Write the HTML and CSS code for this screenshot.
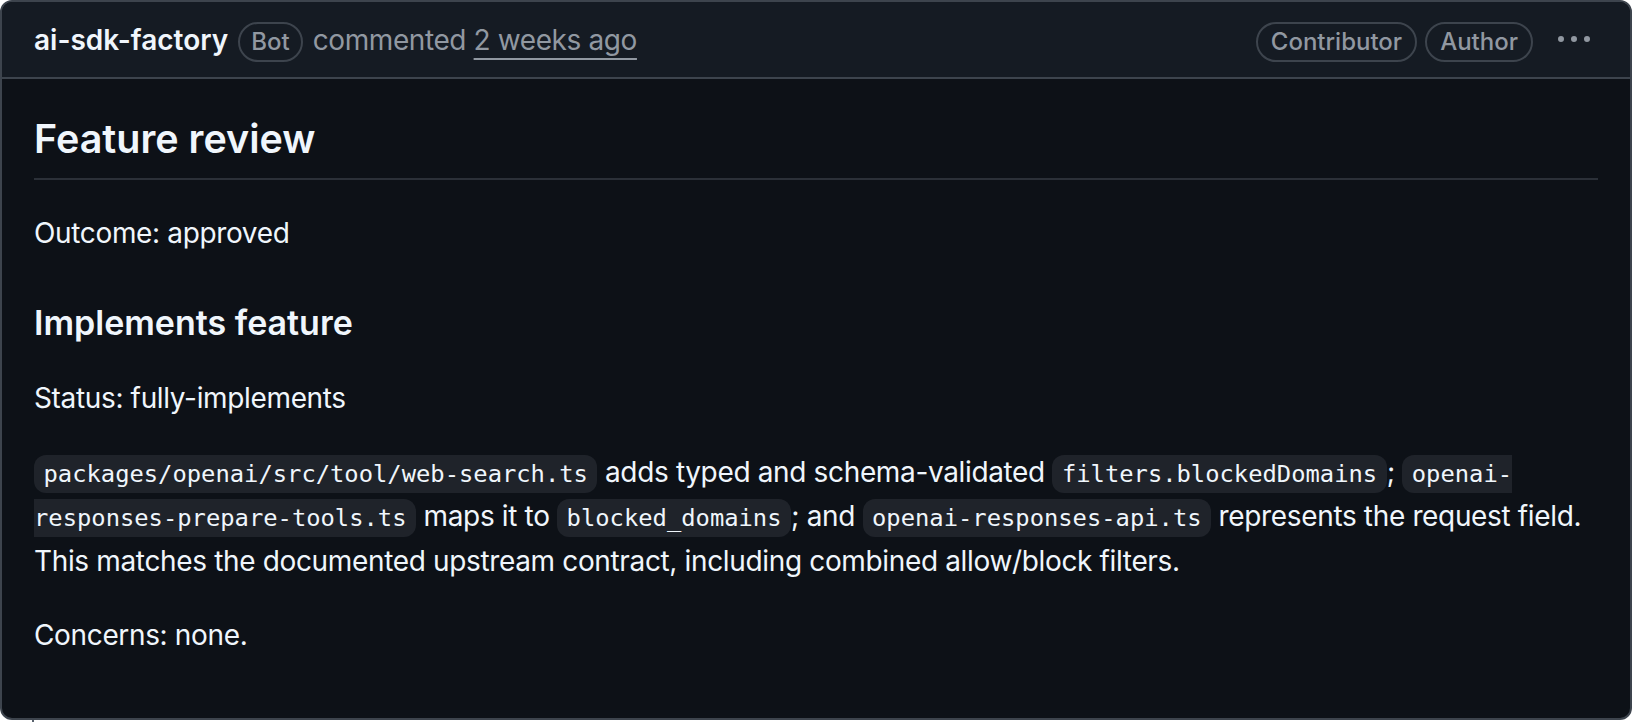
FILE: index.html
```html
<!DOCTYPE html>
<html lang="en">
<head>
<meta charset="utf-8">
<title>Comment</title>
<link rel="stylesheet" href="styles.css">
</head>
<body>
<div class="timeline-item">
  <div class="comment">
    <div class="comment-header">
      <div class="header-left">
        <a class="author">ai-sdk-factory</a>
        <span class="label label-bot">Bot</span>
        <span class="meta">commented <a class="timestamp">2 weeks ago</a></span>
      </div>
      <div class="header-right">
        <span class="label">Contributor</span>
        <span class="label">Author</span>
        <button class="kebab" aria-label="Show options">
          <svg width="32" height="32" viewBox="0 0 16 16" fill="currentColor"><path d="M8 9a1.5 1.5 0 1 0 0-3 1.5 1.5 0 0 0 0 3ZM1.5 9a1.5 1.5 0 1 0 0-3 1.5 1.5 0 0 0 0 3Zm13 0a1.5 1.5 0 1 0 0-3 1.5 1.5 0 0 0 0 3Z"></path></svg>
        </button>
      </div>
    </div>
    <div class="comment-body">
      <h2>Feature review</h2>
      <p>Outcome: approved</p>
      <h3>Implements feature</h3>
      <p>Status: fully-implements</p>
      <p><code>packages/openai/src/tool/web-search.ts</code> adds typed and schema-validated <code>filters.blockedDomains</code>; <code>openai-responses-prepare-tools.ts</code> maps it to <code>blocked_domains</code>; and <code>openai-responses-api.ts</code> represents the request field.<br>This matches the documented upstream contract, including combined allow/block filters.</p>
      <p>Concerns: none.</p>
    </div>
  </div>
  <div class="timeline-line"></div>
</div>
</body>
</html>
```
FILE: styles.css
```css
html, body {
  margin: 0;
  padding: 0;
  background: #ffffff;
}

body {
  font-family: Inter, "Noto Sans", "Liberation Sans", sans-serif;
  font-size: 28px;
  line-height: 1.5;
  color: #f0f6fc;
}

.timeline-item {
  display: flex;
  flex-direction: column;
  width: 1632px;
}

.comment {
  border: 2px solid #3d444d;
  border-radius: 12px;
  background: #0d1117;
  overflow: hidden;
}

.comment-header {
  display: flex;
  align-items: center;
  justify-content: space-between;
  height: 75px;
  padding: 0 40px 0 32px;
  background: #151b23;
  border-bottom: 2px solid #3d444d;
}

.header-left,
.header-right {
  display: flex;
  align-items: center;
}

.author {
  font-weight: 600;
  color: #f0f6fc;
  margin-right: 10px;
}

.label {
  display: inline-flex;
  align-items: center;
  height: 36px;
  margin-top: 5px;
  padding: 0 13px;
  border: 2px solid #3d444d;
  border-radius: 40px;
  font-size: 24px;
  font-weight: 500;
  color: #9198a1;
  line-height: 36px;
}

.label-bot {
  margin-right: 10px;
  padding: 0 11px;
}

.header-right .label + .label {
  margin-left: 8px;
}

.meta {
  color: #9198a1;
  letter-spacing: -0.4px;
}

.timestamp {
  color: #9198a1;
  text-decoration: underline;
  text-decoration-thickness: 2px;
  text-underline-offset: 8px;
}

.kebab {
  display: flex;
  align-items: center;
  justify-content: center;
  margin-left: 25px;
  padding: 0;
  width: 32px;
  height: 32px;
  border: 0;
  background: transparent;
  color: #9198a1;
}

.comment-body {
  padding: 34px 32px 62px;
}

.comment-body h2 {
  margin: 0 0 32px;
  font-size: 39.5px;
  font-weight: 600;
  line-height: 52px;
  padding-bottom: 13px;
  border-bottom: 2px solid #2b3038;
}

.comment-body h3 {
  margin: 47px 0 32px;
  font-size: 34px;
  font-weight: 600;
  line-height: 43.75px;
}

.comment-body p {
  margin: 0 0 32px;
  letter-spacing: -0.35px;
}

.comment-body p:last-child {
  margin-bottom: 0;
}

.comment-body code {
  font-family: "DejaVu Sans Mono", "Liberation Mono", monospace;
  font-size: 23.8px;
  line-height: 41.5px;
  letter-spacing: 0;
  padding: 4.8px 9.5px;
  background: #1f232a;
  border-radius: 12px;
  color: #f0f6fc;
}

.timeline-line {
  width: 2px;
  height: 6px;
  margin-left: 32px;
  background: #59636e;
}
```
